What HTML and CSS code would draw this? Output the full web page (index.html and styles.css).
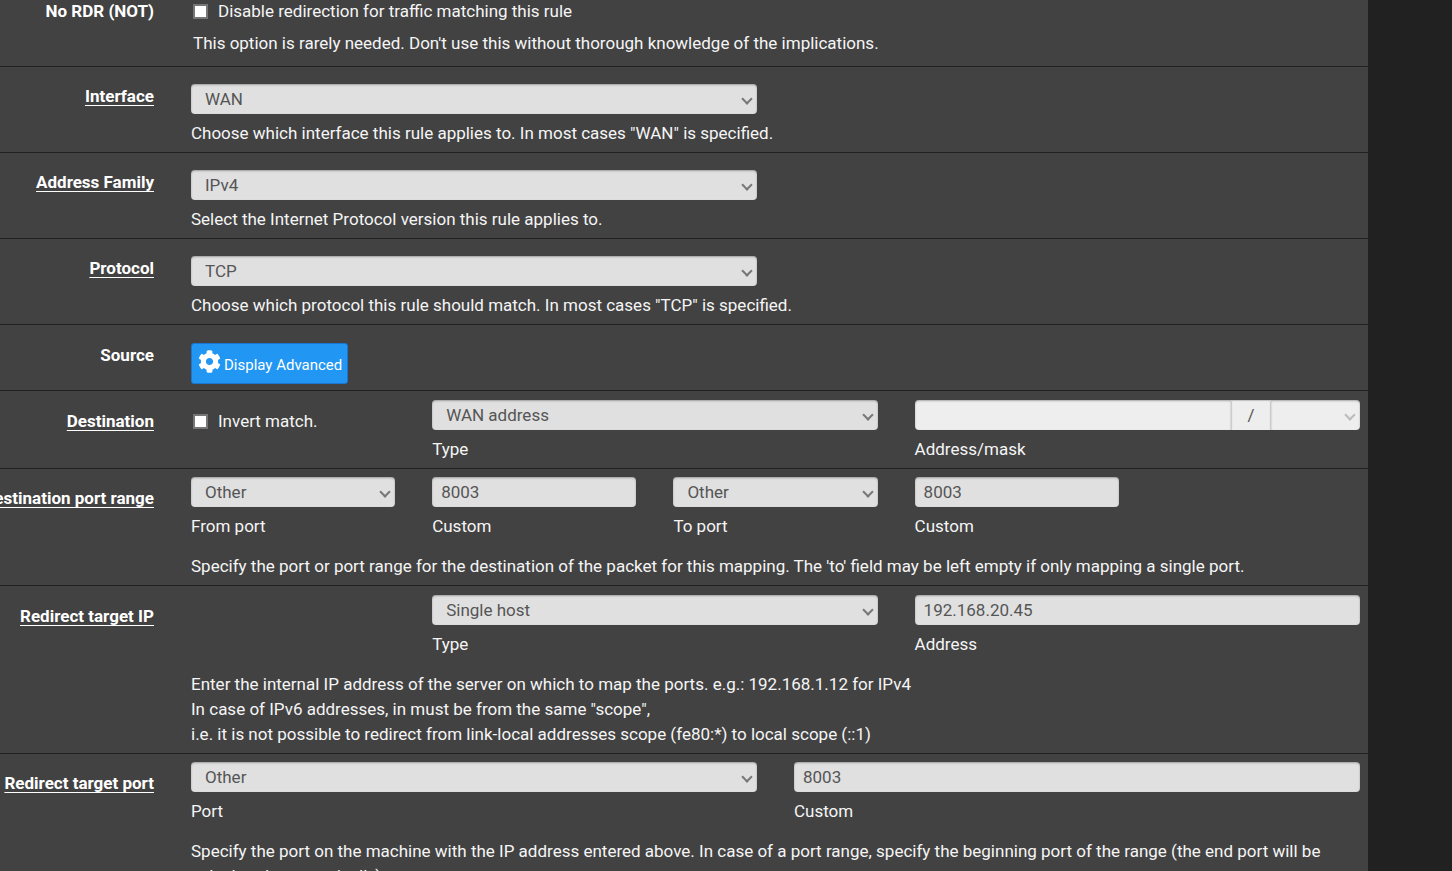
FILE: index.html
```html
<!DOCTYPE html>
<html lang="en">
<head>
<meta charset="utf-8">
<title>Port Forward: Edit</title>
<link rel="stylesheet" href="styles.css">
</head>
<body>
<form class="panel">
  <div class="row row-first">
    <div class="row-label"><span>No RDR (NOT)</span></div>
    <div class="row-body">
      <label class="check"><input type="checkbox"> Disable redirection for traffic matching this rule</label>
      <p class="help help-check">This option is rarely needed. Don't use this without thorough knowledge of the implications.</p>
    </div>
  </div>

  <div class="row row-simple">
    <div class="row-label"><label class="required" for="interface">Interface</label></div>
    <div class="row-body">
      <div class="half select"><select id="interface" class="control"><option>WAN</option></select></div>
      <p class="help">Choose which interface this rule applies to. In most cases "WAN" is specified.</p>
    </div>
  </div>

  <div class="row row-simple">
    <div class="row-label"><label class="required" for="family">Address Family</label></div>
    <div class="row-body">
      <div class="half select"><select id="family" class="control"><option>IPv4</option></select></div>
      <p class="help">Select the Internet Protocol version this rule applies to.</p>
    </div>
  </div>

  <div class="row row-simple">
    <div class="row-label"><label class="required" for="protocol">Protocol</label></div>
    <div class="row-body">
      <div class="half select"><select id="protocol" class="control"><option>TCP</option></select></div>
      <p class="help">Choose which protocol this rule should match. In most cases "TCP" is specified.</p>
    </div>
  </div>

  <div class="row row-simple row-action">
    <div class="row-label"><span>Source</span></div>
    <div class="row-body">
      <button type="button" class="button">
        <svg class="cog" viewBox="0 0 512 512" aria-hidden="true"><path fill="currentColor" d="M487.4 315.7l-42.600-24.600c4.300-23.200 4.300-47 0-70.200l42.600-24.600c4.900-2.800 7.100-8.600 5.500-14-11.100-35.600-30-67.800-54.700-94.600-3.800-4.100-10-5.100-14.800-2.300L380.800 110c-17.900-15.400-38.500-27.300-60.800-35.100V25.800c0-5.600-3.900-10.500-9.400-11.700-36.700-8.200-74.300-7.800-109.200 0-5.500 1.200-9.400 6.100-9.400 11.700V75c-22.200 7.900-42.800 19.800-60.800 35.100L88.700 85.500c-4.900-2.800-11-1.900-14.800 2.300-24.700 26.700-43.600 58.900-54.700 94.600-1.700 5.400.6 11.200 5.500 14L67.300 221c-4.300 23.200-4.300 47 0 70.200l-42.600 24.600c-4.900 2.800-7.100 8.600-5.500 14 11.100 35.600 30 67.800 54.700 94.600 3.800 4.100 10 5.100 14.800 2.300l42.600-24.600c17.900 15.400 38.500 27.300 60.800 35.100v49.200c0 5.600 3.900 10.500 9.400 11.700 36.700 8.200 74.300 7.800 109.200 0 5.500-1.200 9.400-6.100 9.400-11.700v-49.200c22.200-7.900 42.800-19.800 60.800-35.100l42.600 24.600c4.900 2.800 11 1.900 14.800-2.300 24.700-26.700 43.600-58.900 54.700-94.600 1.500-5.500-.7-11.300-5.600-14.100zM256 336c-44.100 0-80-35.900-80-80s35.900-80 80-80 80 35.900 80 80-35.900 80-80 80z"/></svg>
        <span>Display Advanced</span>
      </button>
    </div>
  </div>

  <div class="row row-target">
    <div class="row-label"><span class="required">Destination</span></div>
    <div class="row-body">
      <div class="grid">
        <label class="check check-cell"><input type="checkbox"> Invert match.</label>
        <div class="field wide">
          <div class="select"><select id="dst-type" class="control"><option>WAN address</option></select></div>
          <label for="dst-type">Type</label>
        </div>
        <div class="field wide">
          <div class="group">
            <input id="dst-address" class="control" type="text" disabled>
            <span class="addon">/</span>
            <div class="select mask"><select class="control" aria-label="Mask" disabled><option></option></select></div>
          </div>
          <label for="dst-address">Address/mask</label>
        </div>
      </div>
    </div>
  </div>

  <div class="row">
    <div class="row-label"><span class="required">Destination port range</span></div>
    <div class="row-body">
      <div class="grid">
        <div class="field">
          <div class="select"><select id="from-port" class="control"><option>Other</option></select></div>
          <label for="from-port">From port</label>
        </div>
        <div class="field">
          <input id="from-custom" class="control" type="text" value="8003">
          <label for="from-custom">Custom</label>
        </div>
        <div class="field">
          <div class="select"><select id="to-port" class="control"><option>Other</option></select></div>
          <label for="to-port">To port</label>
        </div>
        <div class="field">
          <input id="to-custom" class="control" type="text" value="8003">
          <label for="to-custom">Custom</label>
        </div>
      </div>
      <p class="help help-group">Specify the port or port range for the destination of the packet for this mapping. The 'to' field may be left empty if only mapping a single port.</p>
    </div>
  </div>

  <div class="row row-target">
    <div class="row-label"><span class="required">Redirect target IP</span></div>
    <div class="row-body">
      <div class="grid">
        <div class="field wide second">
          <div class="select"><select id="target-type" class="control"><option>Single host</option></select></div>
          <label for="target-type">Type</label>
        </div>
        <div class="field wide">
          <input id="target-address" class="control" type="text" value="192.168.20.45">
          <label for="target-address">Address</label>
        </div>
      </div>
      <p class="help help-group">Enter the internal IP address of the server on which to map the ports. e.g.: 192.168.1.12 for IPv4<br>In case of IPv6 addresses, in must be from the same "scope",<br>i.e. it is not possible to redirect from link-local addresses scope (fe80:*) to local scope (::1)</p>
    </div>
  </div>

  <div class="row">
    <div class="row-label"><span class="required">Redirect target port</span></div>
    <div class="row-body">
      <div class="halves">
        <div class="field">
          <div class="select"><select id="target-port" class="control"><option>Other</option></select></div>
          <label for="target-port">Port</label>
        </div>
        <div class="field">
          <input id="target-custom" class="control" type="text" value="8003">
          <label for="target-custom">Custom</label>
        </div>
      </div>
      <p class="help help-group">Specify the port on the machine with the IP address entered above. In case of a port range, specify the beginning port of the range (the end port will be calculated automatically).</p>
    </div>
  </div>
</form>
</body>
</html>
```
FILE: styles.css
```css
* {
  box-sizing: border-box;
}

body {
  margin: 0;
  height: 100vh;
  overflow: hidden;
  background: #212121;
  color: #f5f5f5;
  font: 17px/25px Roboto, "Liberation Sans", sans-serif;
}

.panel {
  margin-right: 84px;
  background: #424242;
}

.row {
  display: grid;
  grid-template-columns: 154px minmax(0, 1fr);
  column-gap: 37px;
  padding: 8px 8px 6px 0;
  border-bottom: 1px solid #212121;
}

.row-target {
  padding-top: 9px;
}

.row-first {
  padding: 0 8px 10px 0;
}

.row-simple {
  padding-top: 17px;
}

.row-action {
  padding-top: 18px;
}

.row-label {
  display: flex;
  justify-content: flex-end;
  padding-top: 9px;
  color: #fff;
  font-weight: 700;
  white-space: nowrap;
}

.row-simple .row-label {
  padding-top: 0;
}

.row-first .row-label {
  padding-top: 0;
  line-height: 23px;
}

.required {
  text-decoration: underline 1px;
  text-underline-offset: 3px;
  text-decoration-skip-ink: none;
}

.grid {
  display: grid;
  grid-template-columns: repeat(5, minmax(0, 1fr));
  column-gap: 37px;
}

.halves {
  display: grid;
  grid-template-columns: repeat(2, minmax(0, 1fr));
  column-gap: 37px;
}

.half {
  width: calc(50% - 19px);
}

.wide {
  grid-column: span 2;
}

.second {
  grid-column: 2 / span 2;
}

.field {
  display: flex;
  flex-direction: column;
  gap: 7px;
}

.help {
  margin: 7px 0 0;
}

.help-check {
  margin-top: 8px;
  padding-left: 2px;
}

.help-group {
  margin-top: 15px;
}

.check {
  display: flex;
  align-items: center;
  gap: 10px;
  padding-left: 2px;
  line-height: 23px;
}

.check-cell {
  align-self: start;
  padding-top: 10px;
}

.check input {
  appearance: none;
  width: 15px;
  height: 15px;
  margin: 0;
  border: 2px solid #767676;
  background: #fff;
}

.control {
  display: block;
  width: 100%;
  height: 30px;
  margin: 0;
  padding: 0 9px;
  border: 0;
  border-radius: 4px;
  background: #e0e0e0;
  box-shadow: inset 0 1px 2px rgba(0, 0, 0, .3);
  color: #555;
  font: 17px/25px Roboto, "Liberation Sans", sans-serif;
}

.select {
  position: relative;
}

.select .control {
  appearance: none;
  padding: 0 24px 0 14px;
}

.select::after {
  content: "";
  position: absolute;
  top: 11px;
  right: 6px;
  width: 6px;
  height: 6px;
  border: solid #777;
  border-width: 0 2px 2px 0;
  transform: rotate(45deg);
  pointer-events: none;
}

.group {
  display: flex;
}

.group .control {
  background: #eee;
  opacity: 1;
}

.group > .control {
  flex: 1;
  min-width: 0;
  border-radius: 4px 0 0 4px;
}

.addon {
  width: 40px;
  border: solid #ccc;
  border-width: 0 1px;
  background: #eee;
  box-shadow: inset 0 1px 1px rgba(0, 0, 0, .2);
  color: #555;
  line-height: 30px;
  text-align: center;
}

.mask {
  width: 89px;
}

.mask .control {
  border-radius: 0 4px 4px 0;
}

.mask::after {
  border-color: #bbb;
}

.button {
  display: flex;
  align-items: center;
  gap: 3px;
  height: 41px;
  padding: 0 5px 0 6px;
  border: 1px solid #1976d2;
  border-radius: 3px;
  background: #2196f3;
  color: #fff;
  font: 15px/22px Roboto, "Liberation Sans", sans-serif;
}

.button span {
  padding-top: 3px;
}

.cog {
  width: 23px;
  height: 23px;
  margin-bottom: 4px;
}
```
